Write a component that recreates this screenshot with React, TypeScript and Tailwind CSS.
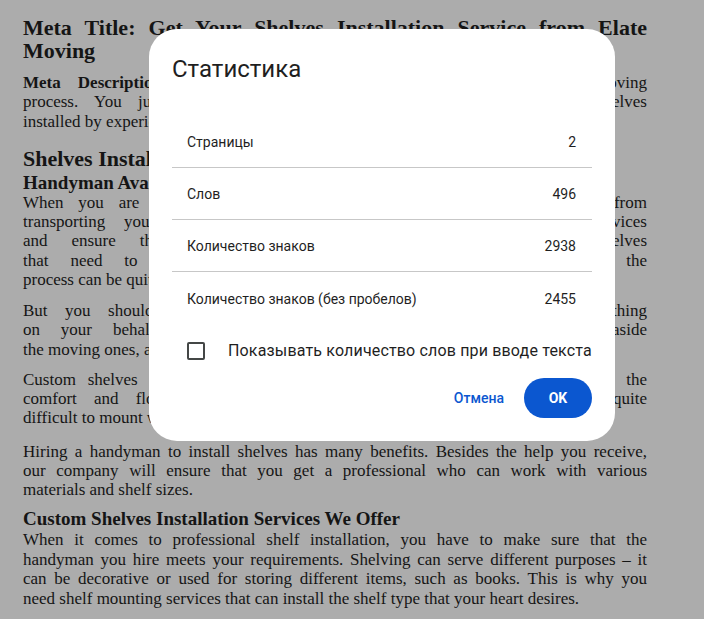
import type { ReactNode } from 'react'

const stats = [
  { label: 'Страницы', value: '2' },
  { label: 'Слов', value: '496' },
  { label: 'Количество знаков', value: '2938' },
  { label: 'Количество знаков (без пробелов)', value: '2455' },
]

// Justified line that keeps the break exactly where the document has it
function Line({ children, last = false }: { children: ReactNode; last?: boolean }) {
  return (
    <div
      className={`whitespace-nowrap ${last ? 'text-left' : 'text-justify [text-align-last:justify]'}`}
    >
      {children}
    </div>
  )
}

function DocumentPage() {
  return (
    <div className="w-[624px] pt-[16px] font-['Liberation_Serif',_'Times_New_Roman',serif] text-[#151515]">
      <h1 className="text-[22px] font-bold leading-[23px]">
        <Line>Meta Title: Get Your Shelves Installation Service from Elate</Line>
        <Line last>Moving</Line>
      </h1>

      <div className="mt-[11px] text-[17px] leading-[19.25px]">
        <Line>
          <b>Meta Description:</b> Hire our handyman services and simplify your moving
        </Line>
        <Line>process. You just pack your belongings, and we get all of your shelves</Line>
        <Line last>installed by experienced professionals.</Line>
      </div>

      <h2 className="mt-[17px] text-[22px] font-bold leading-[22px]">Shelves Installation Services</h2>
      <h3 className="mt-[3px] text-[19px] font-bold leading-[20px]">Handyman Available for Shelf Mounting</h3>

      <div className="text-[17px] leading-[19.25px]">
        <Line>When you are moving, you have plenty of things to handle, ranging from</Line>
        <Line>transporting your belongings to your new home. We offer our services</Line>
        <Line>and ensure that our professional handyman mounts all the shelves</Line>
        <Line>that need to be installed. Without the help of a professional, the</Line>
        <Line last>process can be quite stressful.</Line>
      </div>

      <div className="mt-[12px] text-[17px] leading-[19.25px]">
        <Line>But you should not worry, because we will be there to do everything</Line>
        <Line>on your behalf. We take all of your worries and put them aside</Line>
        <Line last>the moving ones, as well as the others.</Line>
      </div>

      <div className="mt-[11px] text-[17px] leading-[19.25px]">
        <Line>Custom shelves are a great way of organizing your home, and it improves the</Line>
        <Line>comfort and flow of your space. However, custom shelves can be quite</Line>
        <Line last>difficult to mount without an expert.</Line>
      </div>

      <div className="mt-[14px] text-[17px] leading-[19.3px]">
        <Line>Hiring a handyman to install shelves has many benefits. Besides the help you receive,</Line>
        <Line>our company will ensure that you get a professional who can work with various</Line>
        <Line last>materials and shelf sizes.</Line>
      </div>

      <h3 className="mt-[10px] text-[19px] font-bold leading-[20px]">
        Custom Shelves Installation Services We Offer
      </h3>
      <div className="pt-[1px] text-[17px] leading-[19.5px]">
        <Line>When it comes to professional shelf installation, you have to make sure that the</Line>
        <Line>handyman you hire meets your requirements. Shelving can serve different purposes – it</Line>
        <Line>can be decorative or used for storing different items, such as books. This is why you</Line>
        <Line last>need shelf mounting services that can install the shelf type that your heart desires.</Line>
      </div>
    </div>
  )
}

function StatsDialog() {
  return (
    <div className="absolute left-[149px] top-[29px] h-[412px] w-[466px] rounded-[28px] bg-white px-[23px] font-['Roboto',_'Noto_Sans',sans-serif] text-[#1f1f1f]">
      <h2 className="pt-[24px] text-[24px] leading-[32px] text-[#1f1f1f]">Статистика</h2>

      <div className="mt-[31px]">
        {stats.map((s, i) => (
          <div
            key={s.label}
            className={`flex h-[52px] items-center justify-between pl-[15px] pr-[16px] pt-[2px] text-[14px] ${
              i < stats.length - 1 ? 'border-b border-[#c7c7c7]' : ''
            }`}
          >
            <span>{s.label}</span>
            <span>{s.value}</span>
          </div>
        ))}
      </div>

      <label className="flex h-[53px] items-center gap-[23px] pl-[15px]">
        <span className="h-[18px] w-[18px] shrink-0 rounded-[2px] border-2 border-[#444746]" />
        <span className="whitespace-nowrap text-[16px] tracking-[0.16px]">
          Показывать количество слов при вводе текста
        </span>
      </label>

      <div className="mt-[1px] flex items-center justify-end gap-[8px]">
        <button className="h-[40px] rounded-full px-[12px] text-[14px] font-medium text-[#0b57d0]">
          Отмена
        </button>
        <button className="h-[40px] w-[68px] rounded-full bg-[#0b57d0] text-[14px] font-bold text-white">
          OK
        </button>
      </div>
    </div>
  )
}

export default function App() {
  return (
    <div className="relative h-[619px] w-[704px] overflow-hidden bg-[#acacac] pl-[23px]">
      <DocumentPage />
      <StatsDialog />
    </div>
  )
}
